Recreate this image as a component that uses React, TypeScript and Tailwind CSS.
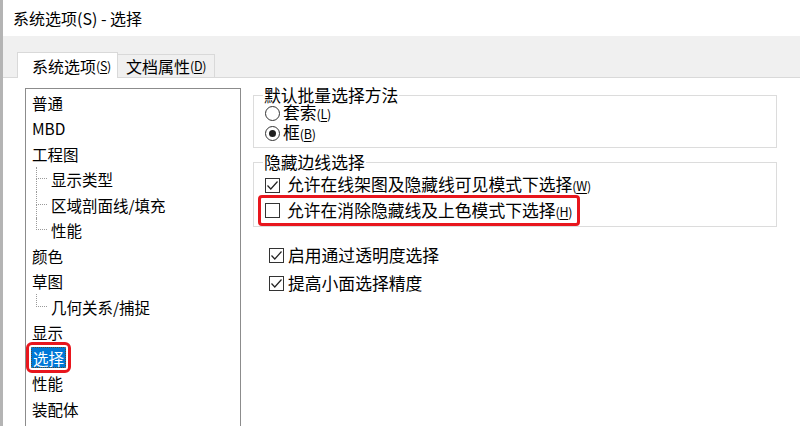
const font = { fontFamily: '"Noto Sans CJK SC", "Noto Sans", sans-serif' };

const Key = ({ k }: { k: string }) => (
  <span className="text-[12.5px] tracking-[-0.3px]">
    (<span className="underline underline-offset-2">{k}</span>)
  </span>
);

const CheckBox = ({ checked }: { checked?: boolean }) => (
  <span className="w-[15px] h-[15px] border border-[#333] bg-white flex items-center justify-center shrink-0">
    {checked && (
      <svg width="13" height="13" viewBox="0 0 13 13">
        <polyline points="1.5,6.5 4.8,10 11.5,2.5" fill="none" stroke="#222" strokeWidth="1.2" />
      </svg>
    )}
  </span>
);

const Radio = ({ checked }: { checked?: boolean }) => (
  <span className="w-[15px] h-[15px] rounded-full border border-[#333] bg-white flex items-center justify-center shrink-0">
    {checked && <span className="w-[7px] h-[7px] rounded-full bg-[#1f1f1f]" />}
  </span>
);

type Node = { label: string; children?: string[]; selected?: boolean };

const tree: Node[] = [
  { label: "普通" },
  { label: "MBD" },
  { label: "工程图", children: ["显示类型", "区域剖面线/填充", "性能"] },
  { label: "颜色" },
  { label: "草图", children: ["几何关系/捕捉"] },
  { label: "显示" },
  { label: "选择", selected: true },
  { label: "性能" },
  { label: "装配体" },
];

const ChildRow = ({ label, last }: { label: string; last: boolean }) => (
  <div className="h-[25.5px] flex items-stretch">
    <div className="ml-[10px] w-[11px] flex flex-col">
      <div className="h-1/2 border-l border-b border-dotted border-[#9a9a9a]" />
      <div className={`h-1/2 ${last ? "" : "border-l border-dotted border-[#9a9a9a]"}`} />
    </div>
    <span className="ml-[4px] self-center">{label}</span>
  </div>
);

const Tree = () => (
  <div className="w-[216px] h-[360px] border border-[#8c8c8c] bg-white pt-[1px] text-[15.5px] leading-[20px] text-black">
    {tree.map((n) => (
      <div key={n.label + (n.children ? "p" : "")}>
        <div className="h-[25.5px] flex items-center pl-[6px]">
          {n.selected ? (
            <span className="bg-[#0078d7] text-white h-[21px] px-[1px] flex items-center border border-dotted border-[#5a4a2a] outline-[3px] outline-solid outline-[#e8161d] outline-offset-[2px] rounded-[1px] -ml-[1px]">
              {n.label}
            </span>
          ) : (
            <span>{n.label}</span>
          )}
        </div>
        {n.children?.map((c, i) => (
          <ChildRow key={c} label={c} last={i === n.children!.length - 1} />
        ))}
      </div>
    ))}
  </div>
);

const Group = ({ title, children }: { title: string; children: React.ReactNode }) => (
  <fieldset className="border border-[#dcdcdc] w-[524px] pl-0 pb-0">
    <legend className="ml-[9px] px-[1px] leading-[16px]">{title}</legend>
    {children}
  </fieldset>
);

export default function App() {
  return (
    <div
      className="w-[800px] h-[426px] overflow-hidden bg-white border-l-[3px] border-[#b4b4b4] text-black"
      style={font}
    >
      <div className="h-[36px] flex items-center pl-[10px] text-[16px] leading-[20px]">
        系统选项(S) - 选择
      </div>

      <div className="h-[42px] bg-[#f0f0f0] border-b border-[#d9d9d9] flex items-end pl-[14px] text-[16px] leading-[20px]">
        <div className="h-[26px] -mb-px bg-white border border-b-0 border-[#d9d9d9] pl-[14px] pr-[2px] flex items-center w-[101px]">
          系统选项<Key k="S" />
        </div>
        <div className="h-[23px] bg-[#f0f0f0] border border-l-0 border-b-0 border-[#d9d9d9] pl-[8px] flex items-center w-[97px]">
          文档属性<Key k="D" />
        </div>
      </div>

      <div className="flex pt-[10px] pl-[22px]">
        <Tree />

        <div className="ml-[12px] text-[16.8px] leading-[17px] -mt-[1px]">
          <Group title="默认批量选择方法">
            <div className="pl-[11px] pb-[4px]">
              <div className="h-[20px] flex items-center gap-[3px]">
                <Radio />
                <span>
                  套索<Key k="L" />
                </span>
              </div>
              <div className="h-[20px] flex items-center gap-[3px]">
                <Radio checked />
                <span>
                  框<Key k="B" />
                </span>
              </div>
            </div>
          </Group>

          <div className="h-[6px]" />

          <Group title="隐藏边线选择">
            <div className="pt-[5px]">
              <div className="h-[20px] flex items-center gap-[7px] pl-[11px]">
                <CheckBox checked />
                <span>
                  允许在线架图及隐藏线可见模式下选择<Key k="W" />
                </span>
              </div>
              <div className="ml-[4px] w-fit h-[31px] border-[3px] border-[#e8161d] rounded-[4px] flex items-center gap-[7px] pl-[4px] pr-[5px]">
                <CheckBox />
                <span>
                  允许在消除隐藏线及上色模式下选择<Key k="H" />
                </span>
              </div>
            </div>
          </Group>

          <div className="pt-[14px] pl-[16px]">
            <div className="h-[28px] flex items-center gap-[4px]">
              <CheckBox checked />
              <span>启用通过透明度选择</span>
            </div>
            <div className="h-[28px] flex items-center gap-[4px]">
              <CheckBox checked />
              <span>提高小面选择精度</span>
            </div>
          </div>
        </div>
      </div>
    </div>
  );
}
